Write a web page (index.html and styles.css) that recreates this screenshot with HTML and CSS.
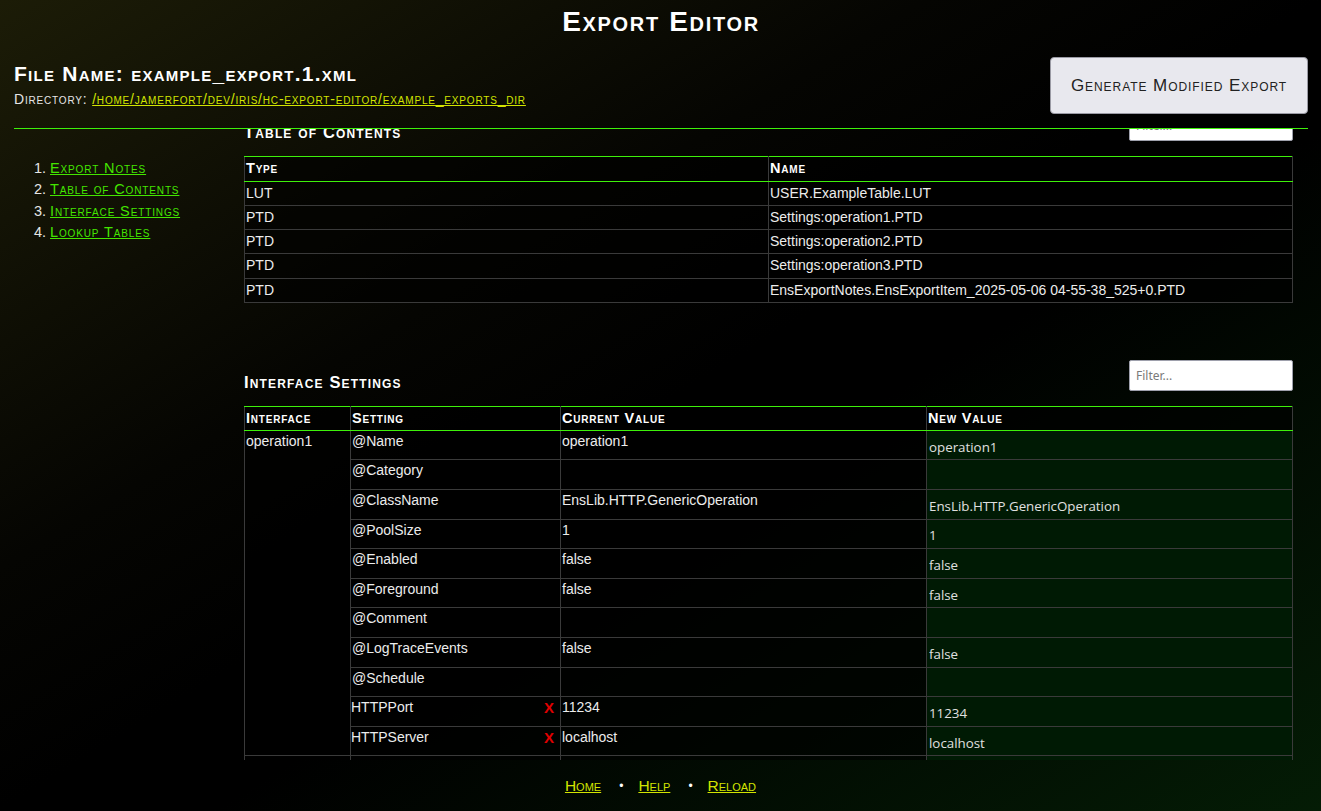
FILE: index.html
```html
<!DOCTYPE html>
<html lang="en">
<head>
<meta charset="utf-8">
<title>Export Editor</title>
<link rel="stylesheet" href="styles.css">
</head>
<body>
<header class="top">
  <h1 class="title">Export Editor</h1>
  <div class="file-row">
    <div class="file-info">
      <h2 class="file-name">File Name: example_export.1.xml</h2>
      <div class="dir">Directory: <a href="#">/home/jamerfort/dev/iris/hc-export-editor/example_exports_dir</a></div>
    </div>
    <button class="gen-btn" type="button">Generate Modified Export</button>
  </div>
</header>
<div class="main">
  <nav class="side-nav">
    <ol>
      <li><a href="#">Export Notes</a></li>
      <li><a href="#">Table of Contents</a></li>
      <li><a href="#">Interface Settings</a></li>
      <li><a href="#">Lookup Tables</a></li>
    </ol>
  </nav>
  <div class="content">
    <div class="scroll">
      <section class="sec">
        <div class="sec-head">
          <h3 class="sec-title">Table of Contents</h3>
          <input class="filter" type="text" placeholder="Filter...">
        </div>
        <table class="grid toc">
          <thead><tr><th>Type</th><th>Name</th></tr></thead>
          <tbody>
            <tr><td>LUT</td><td>USER.ExampleTable.LUT</td></tr>
            <tr><td>PTD</td><td>Settings:operation1.PTD</td></tr>
            <tr><td>PTD</td><td>Settings:operation2.PTD</td></tr>
            <tr><td>PTD</td><td>Settings:operation3.PTD</td></tr>
            <tr><td>PTD</td><td>EnsExportNotes.EnsExportItem_2025-05-06 04-55-38_525+0.PTD</td></tr>
          </tbody>
        </table>
      </section>
      <section class="sec">
        <div class="sec-head">
          <h3 class="sec-title">Interface Settings</h3>
          <input class="filter" type="text" placeholder="Filter...">
        </div>
        <table class="grid iface">
          <colgroup><col class="c1"><col class="c2"><col class="c3"><col></colgroup>
          <thead><tr><th>Interface</th><th>Setting</th><th>Current Value</th><th>New Value</th></tr></thead>
          <tbody>
            <tr><td rowspan="11">operation1</td><td>@Name</td><td>operation1</td><td class="nv"><input type="text" value="operation1"></td></tr>
            <tr><td>@Category</td><td></td><td class="nv"><input type="text" value=""></td></tr>
            <tr><td>@ClassName</td><td>EnsLib.HTTP.GenericOperation</td><td class="nv"><input type="text" value="EnsLib.HTTP.GenericOperation"></td></tr>
            <tr><td>@PoolSize</td><td>1</td><td class="nv"><input type="text" value="1"></td></tr>
            <tr><td>@Enabled</td><td>false</td><td class="nv"><input type="text" value="false"></td></tr>
            <tr><td>@Foreground</td><td>false</td><td class="nv"><input type="text" value="false"></td></tr>
            <tr><td>@Comment</td><td></td><td class="nv"><input type="text" value=""></td></tr>
            <tr><td>@LogTraceEvents</td><td>false</td><td class="nv"><input type="text" value="false"></td></tr>
            <tr><td>@Schedule</td><td></td><td class="nv"><input type="text" value=""></td></tr>
            <tr><td class="setting"><span class="del">X</span>HTTPPort</td><td>11234</td><td class="nv"><input type="text" value="11234"></td></tr>
            <tr><td class="setting"><span class="del">X</span>HTTPServer</td><td>localhost</td><td class="nv"><input type="text" value="localhost"></td></tr>
          </tbody>
          <tbody class="next">
            <tr><td rowspan="3">operation2</td><td>@Name</td><td>operation2</td><td class="nv"><input type="text" value="operation2"></td></tr>
            <tr><td>@Category</td><td></td><td class="nv"><input type="text" value=""></td></tr>
            <tr><td>@ClassName</td><td>EnsLib.HTTP.GenericOperation</td><td class="nv"><input type="text" value="EnsLib.HTTP.GenericOperation"></td></tr>
          </tbody>
        </table>
      </section>
    </div>
  </div>
</div>
<footer class="foot">
  <a href="#">Home</a><span class="dot">•</span><a href="#">Help</a><span class="dot">•</span><a href="#">Reload</a>
</footer>
</body>
</html>
```

FILE: styles.css
```css
html, body {
  margin: 0;
  height: 100%;
}
body {
  display: flex;
  flex-direction: column;
  overflow: hidden;
  color: #e6e6e6;
  font-family: "Liberation Sans", Arial, sans-serif;
  background: linear-gradient(to bottom right, #1c1c07 0%, #050502 35%, #000 50%, #000 58%, #041c05 100%);
}
.top {
  flex: none;
  margin: 0 13px 0 14px;
  padding-bottom: 14px;
  border-bottom: 1px solid #3ef00a;
}
.title {
  margin: 6px 0 0;
  text-align: center;
  font-size: 28px;
  line-height: 32px;
  letter-spacing: 0.06em;
  font-variant: small-caps;
  font-weight: bold;
  color: #fff;
}
.file-row {
  margin-top: 19px;
  display: flex;
  justify-content: space-between;
  align-items: center;
}
.file-info {
  padding-bottom: 3px;
}
.file-name {
  margin: 0;
  font-size: 21px;
  line-height: 24px;
  letter-spacing: 0.06em;
  font-variant: small-caps;
  font-weight: bold;
  color: #fff;
}
.dir {
  margin-top: 5px;
  font-size: 14px;
  line-height: 16px;
  letter-spacing: 0.058em;
  font-variant: small-caps;
  color: #e6e6e6;
}
.dir a {
  color: #d2e400;
}
.gen-btn {
  width: 258px;
  height: 57px;
  background: #e8e8ee;
  border: 1px solid #9a9aa4;
  border-radius: 4px;
  font-family: "Liberation Sans", Arial, sans-serif;
  font-size: 17px;
  letter-spacing: 0.055em;
  font-variant: small-caps;
  color: #222;
  padding: 0;
}
.main {
  flex: 1;
  min-height: 0;
  display: flex;
  padding-left: 14px;
}
.side-nav {
  flex: none;
  width: 230px;
}
.side-nav ol {
  margin: 29px 0 0;
  padding-left: 36px;
  font-size: 14.5px;
  line-height: 21.4px;
  color: #e6e6e6;
}
.side-nav a {
  color: #44e600;
  letter-spacing: 0.06em;
  font-variant: small-caps;
}
.content {
  flex: 1;
  min-width: 0;
  overflow: hidden;
  margin-right: 28px;
}
.scroll {
  margin-top: -19px;
}
.sec {
  margin-bottom: 57px;
}
.sec-head {
  display: flex;
  justify-content: space-between;
  align-items: flex-end;
  margin-bottom: 15px;
}
.sec-title {
  margin: 0;
  font-size: 16.5px;
  line-height: 18px;
  letter-spacing: 0.07em;
  font-variant: small-caps;
  font-weight: bold;
  color: #fff;
}
.filter {
  box-sizing: border-box;
  width: 164px;
  height: 31px;
  border: 1px solid #9ea0ac;
  border-radius: 2px;
  background: #fff;
  padding: 0 6px;
  font-family: "Noto Sans", "Open Sans", sans-serif;
  font-size: 12px;
}
.filter::placeholder {
  color: #7a7a7a;
}
.grid {
  width: 100%;
  border-collapse: collapse;
  table-layout: fixed;
  background: rgba(0, 0, 0, 0.6);
  font-size: 14px;
}
.grid th {
  text-align: left;
  font-variant: small-caps;
  font-weight: bold;
  font-size: 14.5px;
  letter-spacing: 0.055em;
  color: #fff;
  padding: 3px 1px;
  line-height: 17.6px;
  border: 1px solid #3a3a3a;
  border-top: 1px solid #3ef00a;
  border-bottom: 1px solid #3ef00a;
}
.iface th {
  line-height: 17px;
}
.grid td {
  border: 1px solid #3a3a3a;
  vertical-align: top;
  padding: 3px 1px;
  line-height: 17.25px;
  color: #ececec;
}
.iface .c1 { width: 106px; }
.iface .c2 { width: 210px; }
.iface .c3 { width: 366px; }
.iface td {
  padding: 2px 1px;
}
.iface td.nv {
  padding: 0 1px;
  background: #001a04;
  vertical-align: middle;
}
.nv input {
  display: block;
  box-sizing: border-box;
  width: 100%;
  height: 28.6px;
  margin: 0;
  padding: 3px 1px 0;
  border: none;
  background: transparent;
  color: #e0e0e0;
  font-family: "Open Sans", "Noto Sans", sans-serif;
  font-size: 13.333px;
}
.del {
  float: right;
  margin-right: 5px;
  color: #e00000;
  font-weight: bold;
  font-size: 15px;
}
.setting {
  padding-left: 0 !important;
}
.next tr:first-child td {
  border-top: 1px solid #4f8f3f;
}
.foot {
  flex: none;
  height: 51px;
  display: flex;
  justify-content: center;
  align-items: center;
  font-size: 15.5px;
  font-variant: small-caps;
}
.foot a {
  color: #d2e400;
}
.dot {
  color: #fff;
  margin: 0 15px 0 18px;
  font-size: 12px;
}
```
